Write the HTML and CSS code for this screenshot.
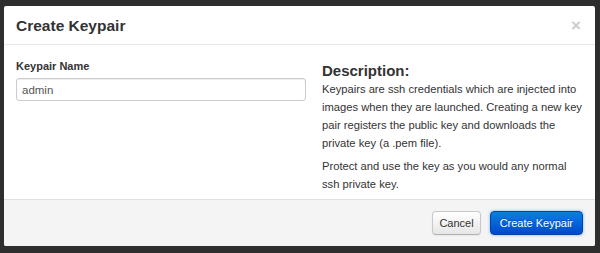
FILE: index.html
```html
<!DOCTYPE html>
<html>
<head>
<meta charset="utf-8">
<link rel="stylesheet" href="styles.css">
</head>
<body>
<div class="modal">
  <div class="modal-header">
    <h3 class="title">Create Keypair</h3>
    <span class="close">&times;</span>
  </div>
  <div class="modal-body">
    <div class="left">
      <label class="label" for="kp">Keypair Name</label>
      <input id="kp" class="input" type="text" value="admin">
    </div>
    <div class="right">
      <h3 class="desc-title">Description:</h3>
      <p class="desc">Keypairs are ssh credentials which are injected into images when they are launched. Creating a new key pair registers the public key and downloads the private key (a .pem file).</p>
      <p class="desc">Protect and use the key as you would any normal ssh private key.</p>
    </div>
  </div>
  <div class="modal-footer">
    <button class="btn">Cancel</button>
    <button class="btn btn-primary">Create Keypair</button>
  </div>
</div>
</body>
</html>
```

FILE: styles.css
```css
html, body {
  margin: 0;
  padding: 0;
  height: 100%;
}
body {
  background: #2e2e2e;
  font-family: "Liberation Sans", Arial, sans-serif;
  color: #333;
  padding: 6px 5px 0 4px;
  box-sizing: border-box;
}
.modal {
  background: #fff;
  height: 240px;
  display: flex;
  flex-direction: column;
  border-radius: 2px;
  overflow: hidden;
}
.modal-header {
  height: 38px;
  padding: 0 12px;
  border-bottom: 1px solid #e8e8e8;
  display: flex;
  align-items: center;
  justify-content: space-between;
}
.title {
  margin: 0;
  font-size: 15.5px;
  font-weight: bold;
  color: #333;
  line-height: 20px;
  padding-top: 2px;
}
.close {
  font-size: 17px;
  font-weight: bold;
  color: #cccccc;
  line-height: 18px;
  margin-right: 2px;
  padding-top: 2px;
}
.modal-body {
  flex: 1;
  display: flex;
  padding: 13px 11px 0 12px;
  gap: 16px;
}
.left {
  width: 290px;
  display: flex;
  flex-direction: column;
}
.label {
  font-size: 11px;
  font-weight: bold;
  line-height: 16px;
  color: #333;
  margin-bottom: 4px;
}
.input {
  box-sizing: border-box;
  width: 290px;
  height: 23px;
  border: 1px solid #ccc;
  border-radius: 3px;
  padding: 0 5px;
  font-family: "Liberation Sans", Arial, sans-serif;
  font-size: 11.5px;
  color: #555;
  box-shadow: inset 0 1px 1px rgba(0,0,0,0.075);
}
.right {
  flex: 1;
  padding-top: 3px;
}
.desc-title {
  margin: 0;
  font-size: 15px;
  font-weight: bold;
  line-height: 19px;
  color: #333;
}
.desc {
  margin: 0 0 5px 0;
  font-size: 11.2px;
  line-height: 18px;
  color: #333;
}
.modal-footer {
  height: 46px;
  background: #f4f4f4;
  border-top: 1px solid #e0e0e0;
  display: flex;
  align-items: center;
  justify-content: flex-end;
  padding: 0 12px;
  gap: 9px;
}
.btn {
  height: 24px;
  padding: 0 6px;
  font-family: "Liberation Sans", Arial, sans-serif;
  font-size: 11px;
  color: #333;
  border: 1px solid #c8c8c8;
  border-bottom-color: #b0b0b0;
  border-radius: 4px;
  background: linear-gradient(#ffffff, #e6e6e6);
  box-shadow: inset 0 1px 0 rgba(255,255,255,0.2), 0 1px 2px rgba(0,0,0,0.05);
}
.btn-primary {
  color: #fff;
  border-color: #0044aa;
  background: linear-gradient(#0a80e0, #0048cc);
  text-shadow: 0 -1px 0 rgba(0,0,0,0.25);
  padding: 0 9px;
  box-shadow: 0 0 3px rgba(40,120,220,0.6);
}
```
